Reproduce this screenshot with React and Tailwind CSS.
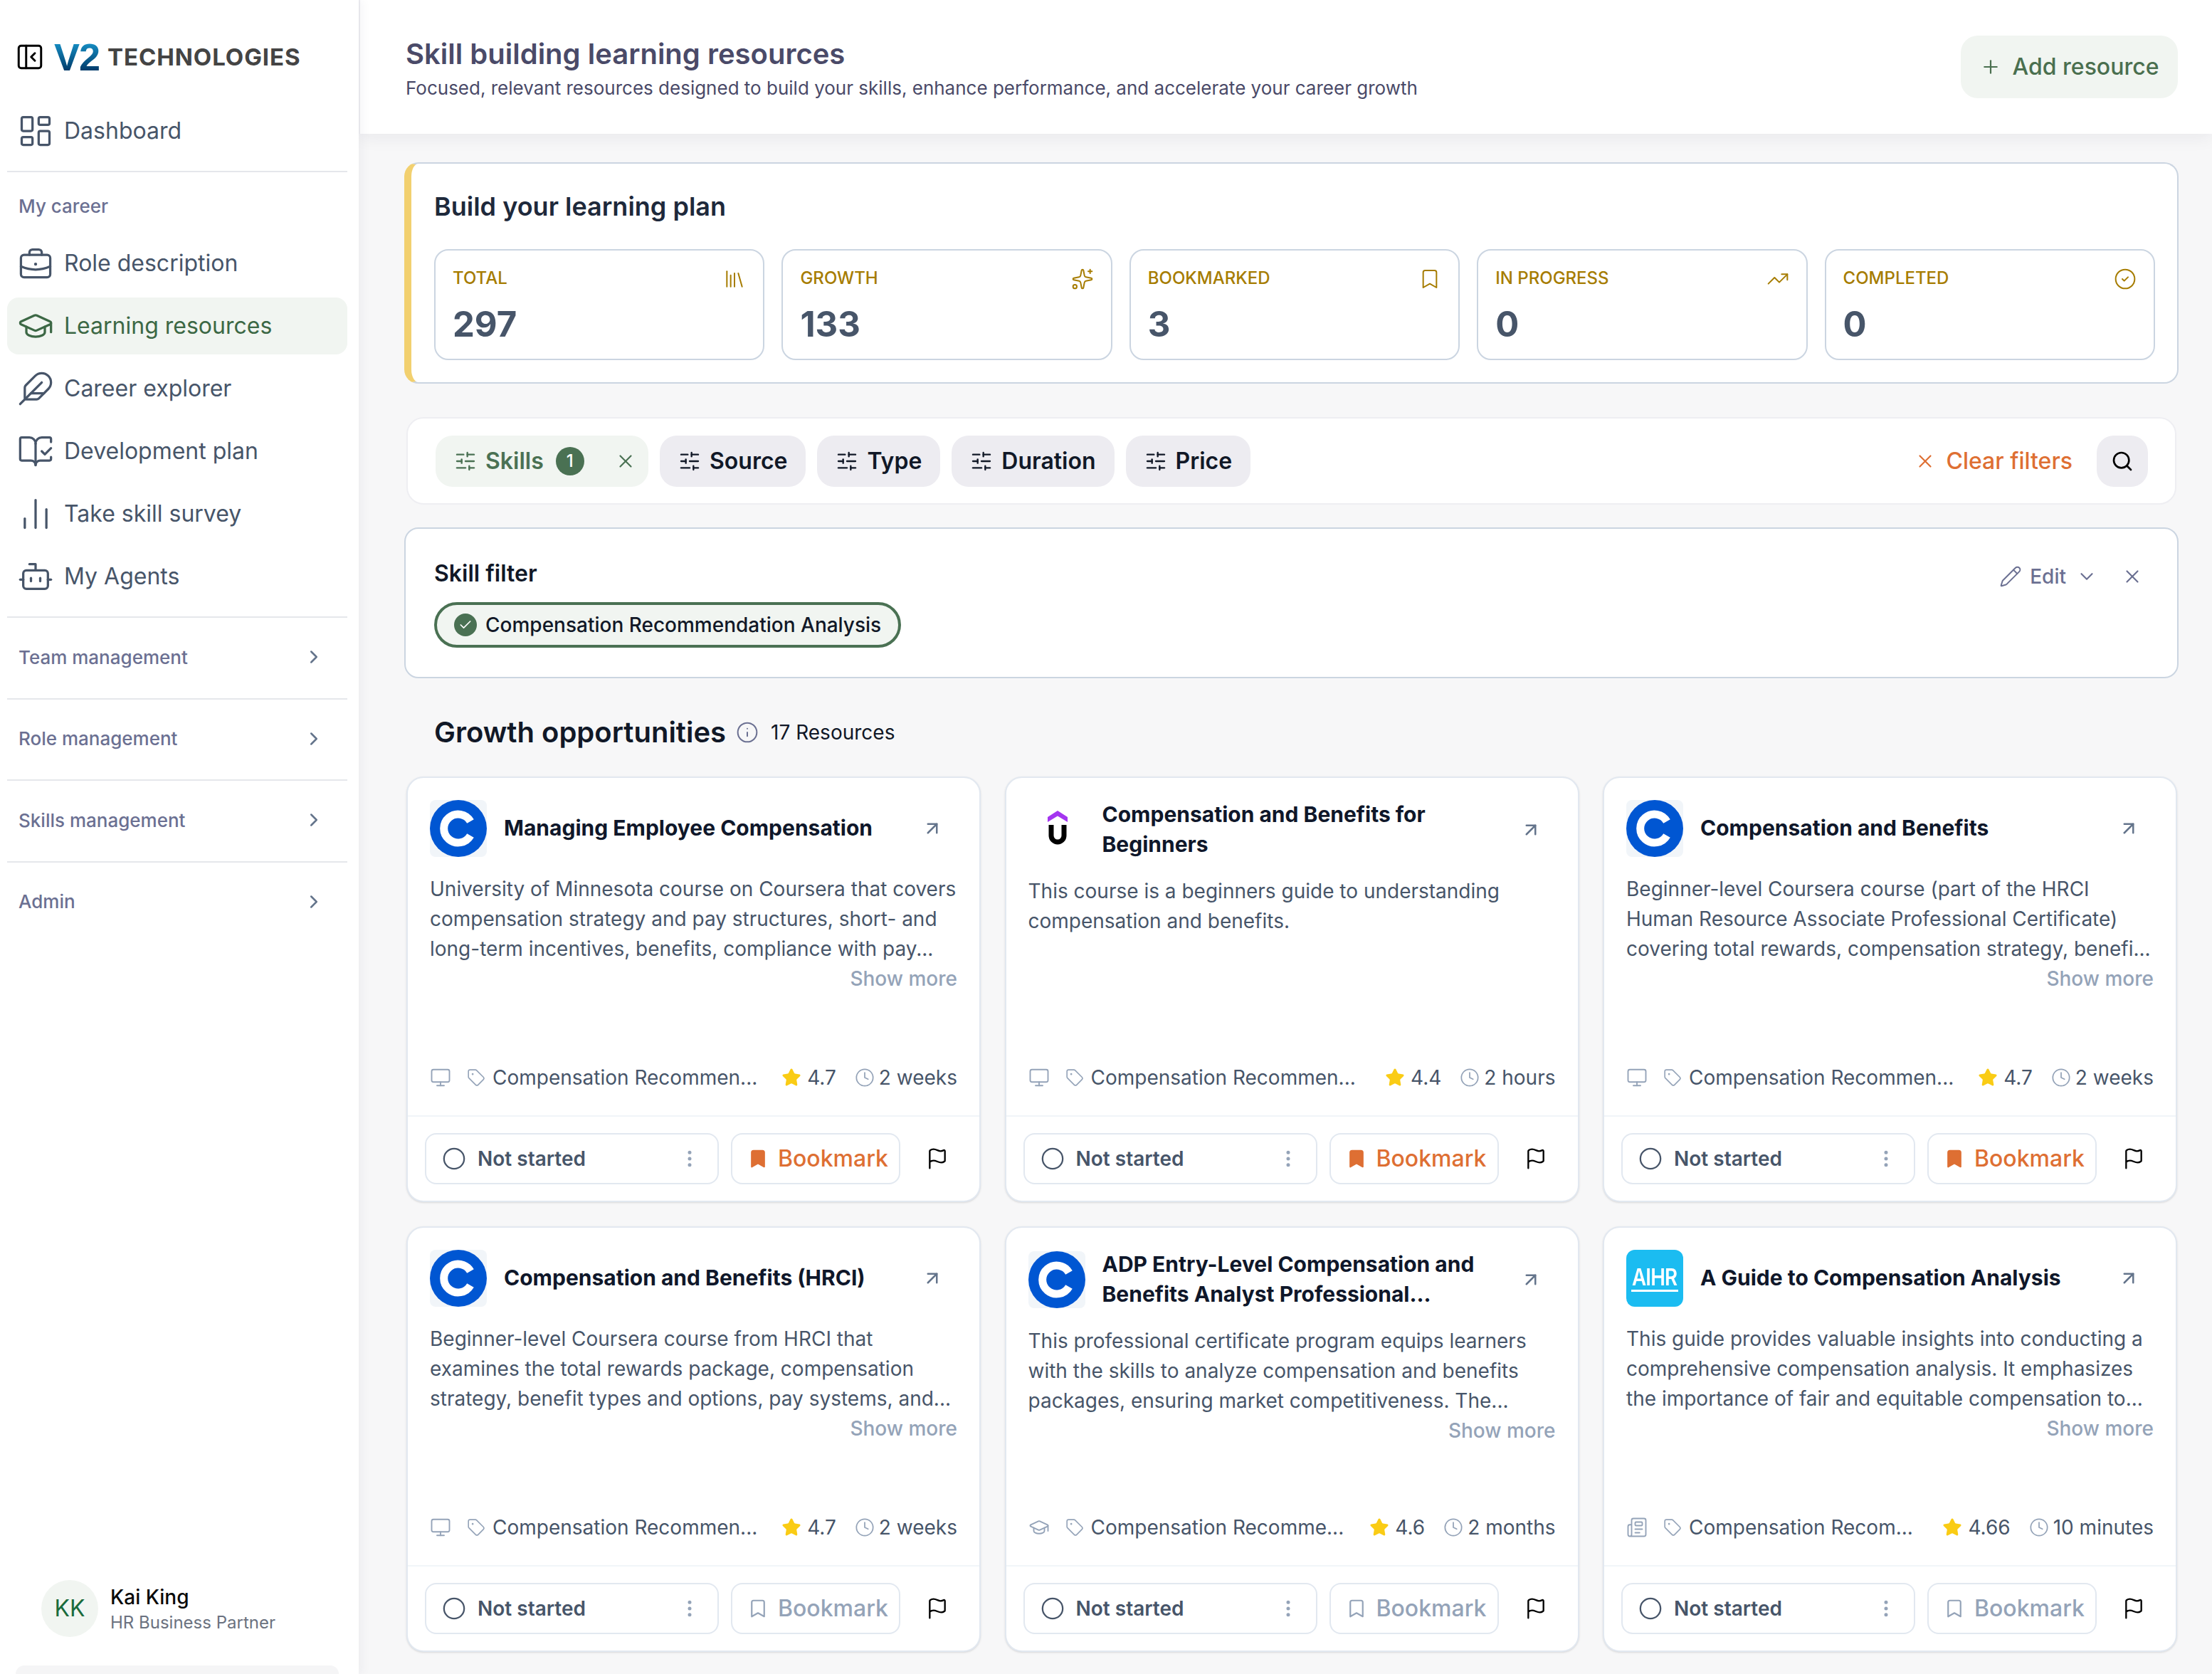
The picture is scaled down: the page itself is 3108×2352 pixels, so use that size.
import React from "react";
import {
  LayoutDashboard, GraduationCap, Feather, BookOpenCheck, ChartNoAxesColumn, Bot, ChevronRight, PanelLeftClose,
  Plus, Library, Sparkles, Bookmark, TrendingUp, CircleCheck, SlidersHorizontal, X, Search, Pencil, ChevronDown, Info,
  ArrowUpRight, Monitor, Newspaper, Tag, Star, Clock, Circle, EllipsisVertical, Flag, Check,
} from "lucide-react";

const Case = ({ size, className }) => (
  <svg width={size} height={size} viewBox="0 0 24 24" fill="none" stroke="currentColor" strokeWidth="1.5" strokeLinecap="round" strokeLinejoin="round" className={className}>
    <rect x="2.5" y="6.5" width="19" height="14.5" rx="2" />
    <path d="M8 6.5V5a2 2 0 0 1 2-2h4a2 2 0 0 1 2 2v1.5" />
    <path d="M2.5 14c6 2.6 13 2.6 19 0" />
    <path d="M12 12.5h.01" strokeWidth="2" />
  </svg>
);

const Coursera = () => (
  <svg width="80" height="80" viewBox="0 0 80 80" className="rounded-lg bg-[#f1f5f9]">
    <circle cx="40" cy="40" r="40" fill="#0056d2" />
    <path d="M57 30a20 20 0 1 0 0 20" fill="none" stroke="#fff" strokeWidth="11" />
  </svg>
);

const Udemy = () => (
  <svg width="80" height="80" viewBox="0 0 80 80">
    <path d="M27 22 41 13l14 9v7l-14-8.5L27 29z" fill="#a435f0" />
    <path d="M32 33v15a9 9 0 0 0 18 0V33" fill="none" stroke="#000" strokeWidth="7" />
  </svg>
);

const Aihr = () => (
  <div className="w-20 h-20 rounded-xl bg-[#1bbcf1] flex flex-col items-center justify-center text-white">
    <span className="text-[33px] leading-[34px] font-semibold tracking-[-1px] scale-x-[0.84]">AIHR</span>
    <span className="w-[66px] h-[3px] bg-white mt-[1px]" />
  </div>
);

const careerNav = [
  { label: "Role description", Icon: Case },
  { label: "Learning resources", Icon: GraduationCap, active: true },
  { label: "Career explorer", Icon: Feather },
  { label: "Development plan", Icon: BookOpenCheck },
  { label: "Take skill survey", Icon: ChartNoAxesColumn },
  { label: "My Agents", Icon: Bot },
];

const NavRow = ({ label, Icon, active }) => (
  <div className={`h-20 rounded-2xl flex items-center pl-[14px] gap-[14px] text-[32px] font-normal ${active ? "bg-[#f1f5f1] text-[#3c6845]" : "text-[#475569]"}`}>
    <Icon size={52} strokeWidth={1.5} className="shrink-0" />
    <span>{label}</span>
  </div>
);

const Sidebar = () => (
  <aside className="w-[504px] shrink-0 bg-white relative z-10 shadow-[4px_0_14px_rgba(40,40,80,0.05)] flex flex-col pl-[10px] pr-[16px]">
    <div className="h-[144px] flex items-center pt-[16px] pl-[11px]">
      <PanelLeftClose size={42} strokeWidth={1.7} className="text-black shrink-0" />
      <span className="ml-[13px] text-[54px] leading-[50px] font-bold tracking-[-1px] bg-gradient-to-b from-[#1b9bd1] to-[#02305e] bg-clip-text text-transparent" style={{ fontFamily: "'Liberation Sans', sans-serif" }}>V2</span>
      <span className="ml-[11px] text-[33px] leading-[44px] font-bold text-[#444444] tracking-[0.9px]">TECHNOLOGIES</span>
    </div>
    <NavRow label="Dashboard" Icon={LayoutDashboard} />
    <div className="h-[2px] bg-[#e5e7eb] mt-4 shrink-0" />
    <div className="pl-4 mt-[29px] h-9 flex items-center text-[26px] font-medium text-[#6b7092]">My career</div>
    <div className="flex flex-col gap-2 mt-[23px]">
      {careerNav.map((n) => <NavRow key={n.label} {...n} />)}
    </div>
    <div className="mt-[16px]">
      {["Team management", "Role management", "Skills management", "Admin"].map((t) => (
        <div key={t} className="border-t-2 border-[#e5e7eb] h-[114.5px] flex items-center justify-between pl-4 pr-[32px] text-[26px] font-medium text-[#6b7092]">
          <span className="relative -top-[1px]">{t}</span>
          <ChevronRight size={30} strokeWidth={2} className="text-[#64748b] relative -top-[1px]" />
        </div>
      ))}
    </div>
    <div className="mt-auto pl-[48px] flex items-center gap-[17px] pb-[40px]">
      <div className="w-20 h-20 rounded-full bg-[#f1f5f1] flex items-center justify-center text-[32px] text-[#1a6b3c]">KK</div>
      <div className="flex flex-col pt-[2px]">
        <span className="text-[28px] leading-[38px] font-medium text-[#0a0a0a]">Kai King</span>
        <span className="text-[24px] leading-[34px] text-[#6b7280]">HR Business Partner</span>
      </div>
    </div>
    <div className="h-3 mx-3 bg-[#f5f5f6] rounded-t-2xl" />
  </aside>
);

const stats = [
  { label: "TOTAL", value: "297", Icon: Library },
  { label: "GROWTH", value: "133", Icon: Sparkles },
  { label: "BOOKMARKED", value: "3", Icon: Bookmark },
  { label: "IN PROGRESS", value: "0", Icon: TrendingUp },
  { label: "COMPLETED", value: "0", Icon: CircleCheck },
];

const FilterBtn = ({ label }) => (
  <div className="h-[72px] rounded-3xl bg-[#edecf1] flex items-center px-[26px] gap-[12px] text-[32px] font-semibold text-[#111827]">
    <SlidersHorizontal size={32} strokeWidth={1.75} />
    <span>{label}</span>
  </div>
);

const cards = [
  {
    Logo: Coursera, title: ["Managing Employee Compensation"],
    desc: ["University of Minnesota course on Coursera that covers", "compensation strategy and pay structures, short- and", "long-term incentives, benefits, compliance with pay..."],
    more: true, Kind: Monitor, tag: "Compensation Recommen...", rating: "4.7", time: "2 weeks", marked: true,
  },
  {
    Logo: Udemy, title: ["Compensation and Benefits for", "Beginners"],
    desc: ["This course is a beginners guide to understanding", "compensation and benefits."],
    Kind: Monitor, tag: "Compensation Recommen...", rating: "4.4", time: "2 hours", marked: true,
  },
  {
    Logo: Coursera, title: ["Compensation and Benefits"],
    desc: ["Beginner-level Coursera course (part of the HRCI", "Human Resource Associate Professional Certificate)", "covering total rewards, compensation strategy, benefi..."],
    more: true, Kind: Monitor, tag: "Compensation Recommen...", rating: "4.7", time: "2 weeks", marked: true,
  },
  {
    Logo: Coursera, title: ["Compensation and Benefits (HRCI)"],
    desc: ["Beginner-level Coursera course from HRCI that", "examines the total rewards package, compensation", "strategy, benefit types and options, pay systems, and..."],
    more: true, Kind: Monitor, tag: "Compensation Recommen...", rating: "4.7", time: "2 weeks",
  },
  {
    Logo: Coursera, title: ["ADP Entry-Level Compensation and", "Benefits Analyst Professional..."],
    desc: ["This professional certificate program equips learners", "with the skills to analyze compensation and benefits", "packages, ensuring market competitiveness. The..."],
    more: true, Kind: GraduationCap, tag: "Compensation Recomme...", rating: "4.6", time: "2 months",
  },
  {
    Logo: Aihr, title: ["A Guide to Compensation Analysis"],
    desc: ["This guide provides valuable insights into conducting a", "comprehensive compensation analysis. It emphasizes", "the importance of fair and equitable compensation to..."],
    more: true, Kind: Newspaper, tag: "Compensation Recom...", rating: "4.66", time: "10 minutes",
  },
];

const Card = ({ Logo, title, desc, more, Kind, tag, rating, time, marked }) => (
  <div className="h-[598px] bg-white border-2 border-[#e2e8f0] rounded-3xl shadow-sm flex flex-col">
    <div className="flex-1 min-h-0 pt-[31px] pl-[31px] pr-[31px] flex flex-col">
      <div className="flex items-center min-h-20">
        <div className="w-20 h-20 shrink-0"><Logo /></div>
        <div className="ml-[24px] flex-1 text-[30px] leading-[41.5px] font-bold text-[#0f172a] whitespace-nowrap">
          {title.map((t) => <div key={t}>{t}</div>)}
        </div>
        <ArrowUpRight size={30} strokeWidth={2} className="text-[#64748b] mr-[20px] shrink-0" />
      </div>
      <div className="mt-[24px] text-[28px] leading-[42px] text-[#475569] whitespace-nowrap">
        {desc.map((t) => <div key={t}>{t}</div>)}
      </div>
      {more && <div className="text-right text-[28px] leading-[42px] font-medium text-[#94a3b8]">Show more</div>}
      <div className="mt-auto mb-[32px] flex items-center justify-between text-[28px] leading-[42px] text-[#475569] whitespace-nowrap">
        <div className="flex items-center">
          <Kind size={30} strokeWidth={1.5} className="text-[#94a3b8]" />
          <Tag size={26} strokeWidth={1.5} className="text-[#94a3b8] ml-[22px] mr-[10px]" />
          <span>{tag}</span>
        </div>
        <div className="flex items-center">
          <Star size={28} fill="#facc15" strokeWidth={1.5} className="text-[#facc15]" />
          <span className="ml-[8px]">{rating}</span>
          <Clock size={28} strokeWidth={1.5} className="text-[#94a3b8] ml-[26px]" />
          <span className="ml-[6px]">{time}</span>
        </div>
      </div>
    </div>
    <div className="h-[120px] shrink-0 border-t-2 border-[#f1f5f9] pl-[24px] flex items-center">
      <div className="w-[413px] h-[72px] rounded-2xl border-2 border-[#e2e8f0] flex items-center pl-[22px] pr-[24px] text-[28px] font-semibold text-[#475569]">
        <Circle size={34} strokeWidth={1.6} />
        <span className="ml-[16px] flex-1">Not started</span>
        <EllipsisVertical size={30} strokeWidth={2} className="text-[#94a3b8]" />
      </div>
      <div className={`ml-[17px] w-[238px] h-[72px] rounded-2xl border-2 border-[#e2e8f0] flex items-center pl-[21px] text-[32px] font-medium ${marked ? "text-[#de6f33]" : "text-[#94a3b8]"}`}>
        <Bookmark size={30} strokeWidth={1.75} fill={marked ? "#de6f33" : "none"} />
        <span className="ml-[13px]">Bookmark</span>
      </div>
      <Flag size={32} strokeWidth={1.75} className="text-black ml-[36px]" />
    </div>
  </div>
);

export default function App() {
  return (
    <div className="w-[3108px] h-[2352px] overflow-hidden flex bg-[#f7f7f8]" style={{ fontFamily: "Inter, 'Liberation Sans', sans-serif" }}>
      <Sidebar />
      <main className="flex-1 min-w-0 flex flex-col">
        <header className="h-[188px] shrink-0 bg-white border-l-2 border-[#ededf1] shadow-[0_4px_24px_rgba(30,30,60,0.07)] flex items-center justify-between pl-[64px] pr-[48px] relative">
          <div className="text-[#4a4a68] mt-[7px]">
            <div className="text-[40px] leading-[52px] font-semibold">Skill building learning resources</div>
            <div className="text-[26px] leading-[44px]">Focused, relevant resources designed to build your skills, enhance performance, and accelerate your career growth</div>
          </div>
          <div className="h-[88px] w-[305px] rounded-3xl bg-[#f1f5f1] text-[#4a6f4f] flex items-center justify-center gap-[16px] text-[32px] font-medium">
            <Plus size={30} strokeWidth={1.75} />
            <span>Add resource</span>
          </div>
        </header>
        <div className="pl-[64px] pr-[47px] pt-[40px]">
          <section className="h-[311px] bg-white border-2 border-[#cbd5e1] border-l-[10px] border-l-[#f2d06f] rounded-[20px] pl-[32px] pr-[31px] pt-[38px]">
            <h2 className="text-[36px] leading-[44px] font-semibold text-[#1e293b]">Build your learning plan</h2>
            <div className="grid grid-cols-5 gap-6 mt-[38px]">
              {stats.map(({ label, value, Icon }) => (
                <div key={label} className="h-[156px] border-2 border-[#cbd5e1] rounded-[20px] pl-[24px] pr-[24px] pt-[23px]">
                  <div className="flex items-center justify-between h-8 text-[24px] font-medium text-[#a67c00]">
                    <span>{label}</span>
                    <Icon size={32} strokeWidth={1.5} className="relative top-[1px]" />
                  </div>
                  <div className="mt-[21px] text-[49px] leading-[56px] font-bold text-[#475569]">{value}</div>
                </div>
              ))}
            </div>
          </section>

          <section className="mx-[3px] mt-[47px] h-[123px] bg-white border-2 border-[#eeeef2] rounded-3xl pl-[39px] pr-[38px] flex items-center">
            <div className="h-[72px] w-[299px] rounded-3xl bg-[#f1f5f1] text-[#4a7153] flex items-center pl-[26px] text-[32px] font-semibold">
              <SlidersHorizontal size={32} strokeWidth={1.75} />
              <span className="ml-[12px]">Skills</span>
              <span className="ml-[17px] w-10 h-10 rounded-full bg-[#4a7153] text-white text-[24px] font-medium flex items-center justify-center">1</span>
              <X size={30} strokeWidth={1.75} className="ml-[43px]" />
            </div>
            <div className="flex items-center gap-4 ml-4">
              <FilterBtn label="Source" />
              <FilterBtn label="Type" />
              <FilterBtn label="Duration" />
              <FilterBtn label="Price" />
            </div>
            <div className="ml-auto flex items-center gap-[14px] text-[32px] font-medium text-[#de6f33]">
              <X size={30} strokeWidth={1.75} />
              <span>Clear filters</span>
            </div>
            <div className="ml-[34px] w-[72px] h-[72px] rounded-3xl bg-[#edecf1] flex items-center justify-center">
              <Search size={32} strokeWidth={2} className="text-black" />
            </div>
          </section>

          <section className="mt-[32px] h-[212px] bg-white border-2 border-[#cbd5e1] rounded-[20px] pl-[40px] pr-[48px] pt-[41px] flex justify-between items-start">
            <div>
              <h3 className="text-[32px] leading-[44px] font-semibold text-[#111827]">Skill filter</h3>
              <div className="mt-[18px] h-16 rounded-full border-4 border-[#4a7153] bg-[#f1f5f1] flex items-center pl-[24px] pr-[24px] text-[28px] font-medium text-[#111827]">
                <span className="w-8 h-8 rounded-full bg-[#4a7153] flex items-center justify-center">
                  <Check size={20} strokeWidth={2} className="text-white" />
                </span>
                <span className="ml-[12px] whitespace-nowrap">Compensation Recommendation Analysis</span>
              </div>
            </div>
            <div className="flex items-center text-[28px] font-medium text-[#6b7092] h-[52px]">
              <Pencil size={32} strokeWidth={1.5} />
              <span className="ml-[11px]">Edit</span>
              <ChevronDown size={30} strokeWidth={1.75} className="ml-[14px]" />
              <X size={30} strokeWidth={1.75} className="ml-[34px]" />
            </div>
          </section>

          <div className="mt-[46px] h-[60px] pl-[42px] flex items-center">
            <h2 className="text-[40px] leading-[60px] font-semibold text-[#111827]">Growth opportunities</h2>
            <Info size={32} strokeWidth={1.5} className="ml-[14px] text-[#6b7092]" />
            <span className="ml-[17px] text-[28px] font-normal text-[#111827]">17 Resources</span>
          </div>

          <div className="mt-[32px] ml-[3px] grid grid-cols-[807px_807px_807px] gap-x-[33.5px] gap-y-[34px]">
            {cards.map((c, i) => <Card key={i} {...c} />)}
          </div>
        </div>
      </main>
    </div>
  );
}
